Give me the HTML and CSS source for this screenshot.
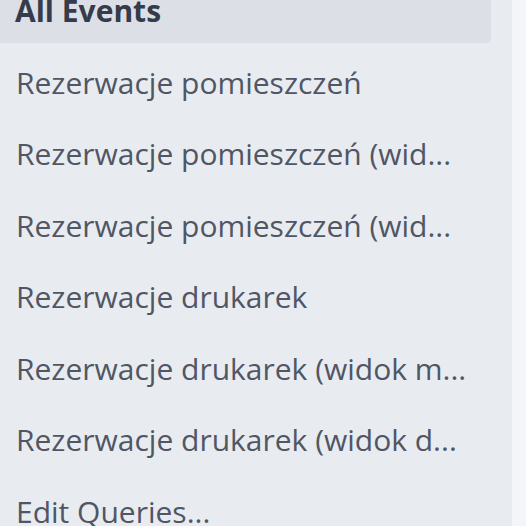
FILE: index.html
```html
<!DOCTYPE html>
<html lang="en">
<head>
  <meta charset="UTF-8">
  <title>Calendar views</title>
  <link rel="stylesheet" href="styles.css">
</head>
<body>
  <div class="page">
    <nav class="views">
      <div class="view-item selected">All Events</div>
      <div class="view-item">Rezerwacje pomieszczeń</div>
      <div class="view-item">Rezerwacje pomieszczeń (wid...</div>
      <div class="view-item">Rezerwacje pomieszczeń (wid...</div>
      <div class="view-item">Rezerwacje drukarek</div>
      <div class="view-item">Rezerwacje drukarek (widok m...</div>
      <div class="view-item">Rezerwacje drukarek (widok d...</div>
      <div class="view-item">Edit Queries...</div>
    </nav>
  </div>
</body>
</html>
```

FILE: styles.css
```css
html, body {
  margin: 0;
  padding: 0;
  height: 100%;
  overflow: hidden;
  background: #f3f5f8;
  font-family: "Open Sans", "Noto Sans", sans-serif;
}
.page {
  display: flow-root;
  width: 512px;
  height: 100%;
  background: #e8ebf0;
}
.views {
  display: flex;
  flex-direction: column;
  gap: 7.5px;
  margin-top: -21px;
}
.view-item {
  height: 64px;
  line-height: 64px;
  padding-left: 16px;
  margin-right: 21px;
  font-size: 30px;
  color: #505664;
  white-space: nowrap;
  border-radius: 0 0 5px 0;
}
.view-item.selected {
  padding-left: 15px;
  background: #dcdfe5;
  color: #343b4a;
  font-weight: 700;
}
```
